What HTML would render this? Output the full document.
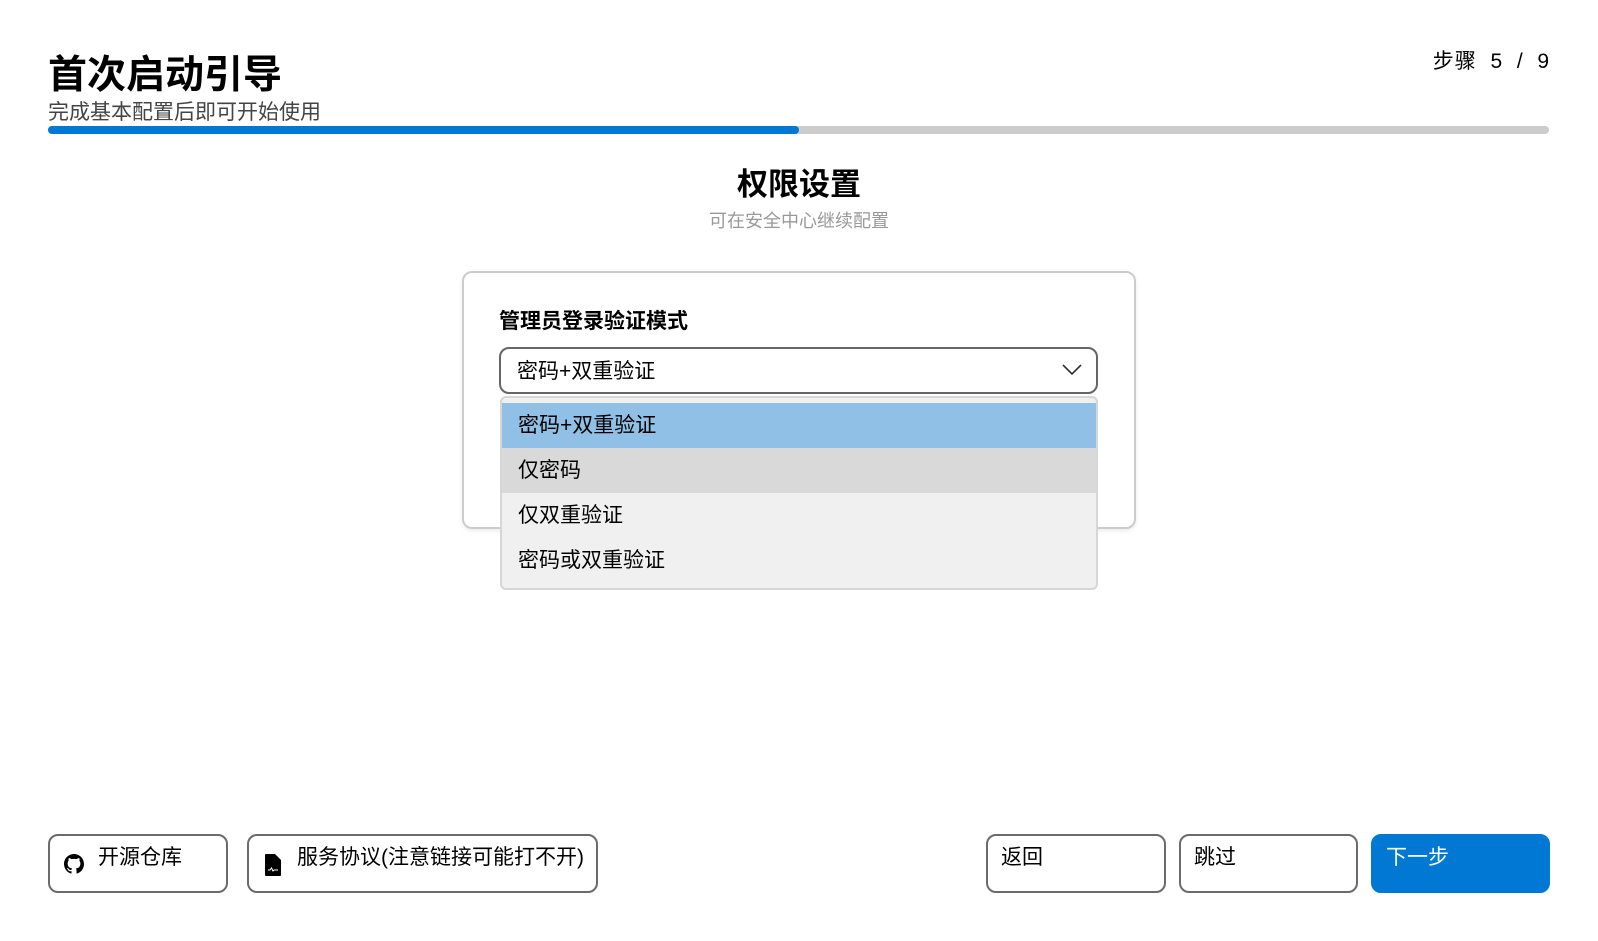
<!DOCTYPE html>
<html><head><meta charset="utf-8"><style>
*{box-sizing:border-box;margin:0;padding:0}
body{width:1598px;height:941px;background:#fff;position:relative;overflow:hidden;font-family:"Liberation Sans","Noto Sans CJK SC",sans-serif;color:#000}
.a{position:absolute;white-space:nowrap}
.btn{position:absolute;top:834px;height:59px;border:2px solid #6b6b6b;border-radius:10px;background:#fff;font-size:21px;padding:5px 0 0 13px}
.item{position:absolute;left:0;width:100%;height:45px;font-size:21px;padding:6px 0 0 16px}
</style></head><body>
<div class="a" style="left:48px;top:50px;font-size:39px;font-weight:bold;line-height:52px">首次启动引导</div>
<div class="a" style="left:48px;top:100px;font-size:21px;color:#444;line-height:26px">完成基本配置后即可开始使用</div>
<div class="a" style="right:48px;top:49px;font-size:21px;line-height:26px;letter-spacing:1px">步骤 &nbsp;5 &nbsp;/ &nbsp;9</div>
<div class="a" style="left:48px;top:126px;width:1501px;height:8px;border-radius:4px;background:#ccc"></div>
<div class="a" style="left:48px;top:126px;width:751px;height:8px;border-radius:4px;background:#0078d4"></div>
<div class="a" style="left:0;width:1598px;text-align:center;top:166px;font-size:31px;font-weight:bold;line-height:38px">权限设置</div>
<div class="a" style="left:0;width:1598px;text-align:center;top:209px;font-size:18px;color:#999;line-height:24px">可在安全中心继续配置</div>
<div class="a" style="left:462px;top:271px;width:674px;height:258px;border:2px solid #ccc;border-radius:10px;box-shadow:0 2px 4px rgba(0,0,0,.08)"></div>
<div class="a" style="left:499px;top:308px;font-size:21px;font-weight:bold;line-height:28px">管理员登录验证模式</div>
<div class="a" style="left:499px;top:347px;width:599px;height:47px;border:2px solid #666;border-radius:10px;background:#fff;font-size:21px;padding:6px 0 0 16px">密码+双重验证
<svg style="position:absolute;right:14px;top:15px" width="20" height="12" viewBox="0 0 20 12"><path d="M1 1 L10 10 L19 1" fill="none" stroke="#333" stroke-width="1.6"/></svg></div>
<div class="a" style="left:500px;top:396px;width:598px;height:194px;border:2px solid #d6d6d6;border-radius:6px;background:#f0f0f0;overflow:hidden">
<div class="item" style="top:5px;background:#90c0e6">密码+双重验证</div>
<div class="item" style="top:50px;background:#d9d9d9">仅密码</div>
<div class="item" style="top:95px">仅双重验证</div>
<div class="item" style="top:140px">密码或双重验证</div>
</div>
<div class="btn" style="left:48px;width:180px;padding-left:48px">开源仓库
<svg style="position:absolute;left:14px;top:18px" width="20" height="20" viewBox="0 0 16 16"><path fill="#000" d="M8 0C3.58 0 0 3.580 0 8c0 3.54 2.29 6.530 5.470 7.590.4.07.55-.17.55-.38 0-.19-.01-.82-.01-1.490-2.010.37-2.530-.49-2.690-.94-.09-.23-.48-.94-.82-1.130-.28-.15-.68-.52-.01-.53.63-.01 1.080.58 1.230.82.72 1.210 1.870.87 2.330.66.07-.52.28-.87.51-1.070-1.780-.2-3.640-.89-3.640-3.950 0-.87.31-1.590.82-2.150-.08-.2-.36-1.020.08-2.120 0 0 .67-.21 2.200.82.64-.18 1.320-.27 2-.27.68 0 1.360.09 2 .27 1.530-1.040 2.200-.82 2.200-.82.44 1.100.16 1.920.08 2.120.51.56.82 1.270.82 2.150 0 3.070-1.870 3.750-3.650 3.950.29.25.54.73.54 1.480 0 1.070-.01 1.930-.01 2.200 0 .21.15.46.55.38A8.010 8.010 0 0016 8c0-4.420-3.580-8-8-8z"/></svg></div>
<div class="btn" style="left:247px;width:351px;padding-left:48px">服务协议(注意链接可能打不开)
<svg style="position:absolute;left:16px;top:18px" width="16" height="22" viewBox="0 0 16 22"><path fill="#000" d="M1 0h9l6 6v15a1 1 0 0 1-1 1H1a1 1 0 0 1-1-1V1a1 1 0 0 1 1-1z"/><path d="M3 16h2l1.5-2 1.5 3 1-1h4" fill="none" stroke="#fff" stroke-width="1"/></svg></div>
<div class="btn" style="left:986px;width:180px">返回</div>
<div class="btn" style="left:1179px;width:179px">跳过</div>
<div class="btn" style="left:1371px;width:179px;background:#0078d4;border-color:#0078d4;color:#fff">下一步</div>
</body></html>
